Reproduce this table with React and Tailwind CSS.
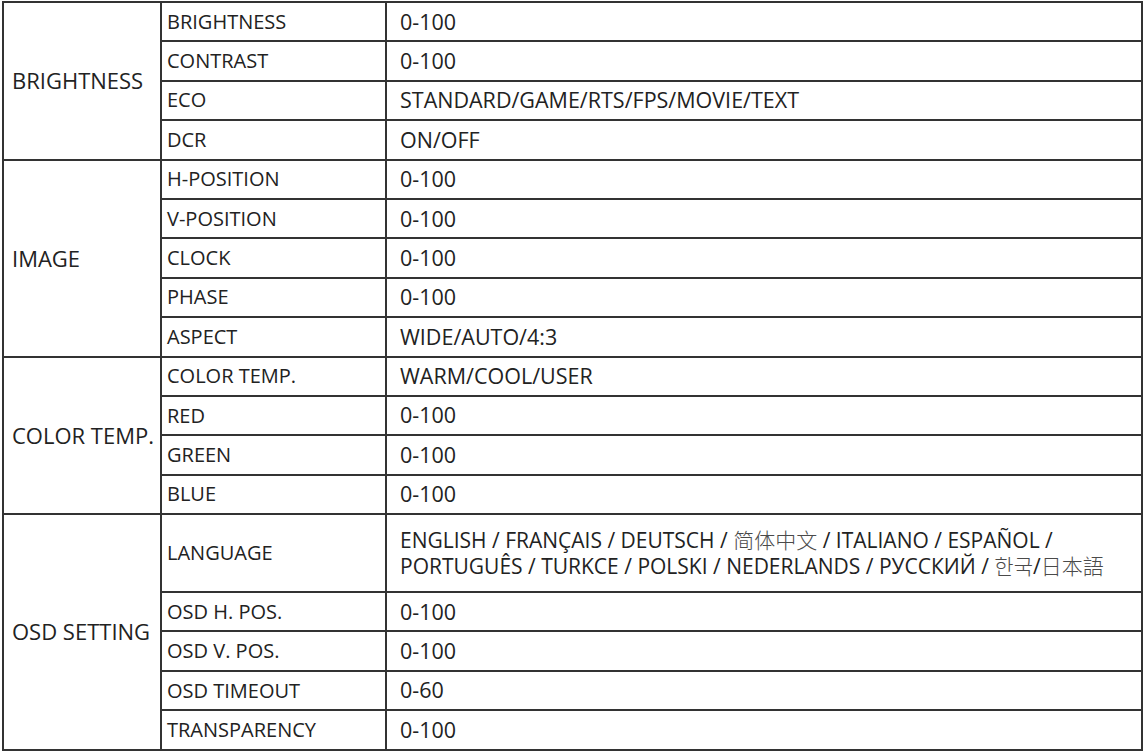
import React from 'react';

const groups = [
  {
    name: 'BRIGHTNESS',
    rows: [
      ['BRIGHTNESS', '0-100'],
      ['CONTRAST', '0-100'],
      ['ECO', 'STANDARD/GAME/RTS/FPS/MOVIE/TEXT'],
      ['DCR', 'ON/OFF'],
    ],
  },
  {
    name: 'IMAGE',
    rows: [
      ['H-POSITION', '0-100'],
      ['V-POSITION', '0-100'],
      ['CLOCK', '0-100'],
      ['PHASE', '0-100'],
      ['ASPECT', 'WIDE/AUTO/4:3'],
    ],
  },
  {
    name: 'COLOR TEMP.',
    rows: [
      ['COLOR TEMP.', 'WARM/COOL/USER'],
      ['RED', '0-100'],
      ['GREEN', '0-100'],
      ['BLUE', '0-100'],
    ],
  },
  {
    name: 'OSD SETTING',
    rows: [
      ['LANGUAGE', 'LANG'],
      ['OSD H. POS.', '0-100'],
      ['OSD V. POS.', '0-100'],
      ['OSD TIMEOUT', '0-60'],
      ['TRANSPARENCY', '0-100'],
    ],
  },
];

// CJK glyphs print thinner and greyer in the source sheet
function Cjk({ children }) {
  return <span className="font-light text-[#4a4a4a]">{children}</span>;
}

function Languages() {
  return (
    <div className="text-[21px] leading-[26px]">
      <div>
        ENGLISH / FRANÇAIS / DEUTSCH / <Cjk>简体中文</Cjk> / ITALIANO / ESPAÑOL /
      </div>
      <div>
        PORTUGUÊS / TURKCE / POLSKI / NEDERLANDS / РУССКИЙ / <Cjk>한국</Cjk>/<Cjk>日本語</Cjk>
      </div>
    </div>
  );
}

export default function App() {
  const cell = 'border-2 border-[#333] align-middle whitespace-nowrap';

  return (
    <div
      className="bg-white w-[1147px] h-[751px] overflow-hidden pt-[1px] pl-[2px] text-[#222]"
      style={{ fontFamily: '"Open Sans", "Noto Sans CJK SC", "Noto Sans CJK KR", sans-serif' }}
    >
      <table className="border-collapse w-[1141px] table-fixed">
        <colgroup>
          <col className="w-[158px]" />
          <col className="w-[225px]" />
          <col />
        </colgroup>
        <tbody>
          {groups.map((g) =>
            g.rows.map(([label, value], i) => (
              <tr key={g.name + label} className={value === 'LANG' ? 'h-[78px]' : 'h-[39.4px]'}>
                {i === 0 && (
                  <td rowSpan={g.rows.length} className={`${cell} pl-[8px] text-[22px]`}>
                    {g.name}
                  </td>
                )}
                <td className={`${cell} pl-[5px] text-[20px]`}>{label}</td>
                <td className={`${cell} pl-[13px] text-[21.5px]`}>
                  {value === 'LANG' ? <Languages /> : value}
                </td>
              </tr>
            ))
          )}
          {/* next group starts just below the visible area */}
          <tr className="h-[39.4px]">
            <td className={cell}></td>
            <td className={cell}></td>
            <td className={cell}></td>
          </tr>
        </tbody>
      </table>
    </div>
  );
}
